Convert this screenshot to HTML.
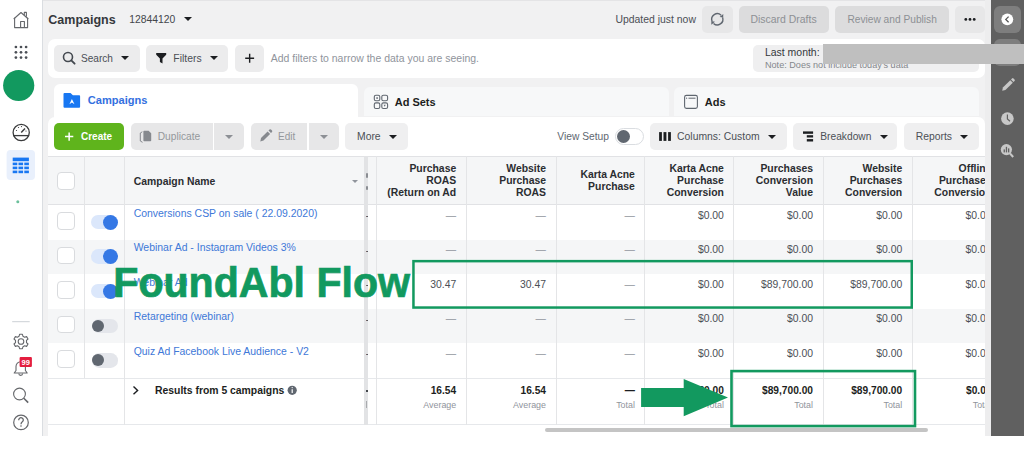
<!DOCTYPE html>
<html><head><meta charset="utf-8">
<style>
*{margin:0;padding:0;box-sizing:border-box}
html,body{width:1024px;height:469px;overflow:hidden;background:#fff;font-family:"Liberation Sans",sans-serif}
#root{position:absolute;left:0;top:0;width:1024px;height:436px;background:#f1f1f2;overflow:hidden}
.a{position:absolute}
.t{position:absolute;white-space:nowrap;line-height:1}
.r{text-align:right}
.btn{position:absolute;background:#e7e7e8;border-radius:5px}
.car{position:absolute;width:0;height:0;border-left:4px solid transparent;border-right:4px solid transparent;border-top:4.5px solid #1c1e21}
.vl{position:absolute;width:1px;background:#e4e5e7}
.cb{position:absolute;width:17.5px;height:17.5px;border:1px solid #d9dbde;border-radius:4px;background:#fff}
.hd{position:absolute;font-weight:bold;font-size:10.4px;line-height:12px;color:#2b2d31;text-align:right;white-space:nowrap}
.cell{position:absolute;font-size:10.4px;line-height:1;color:#4b4f56;text-align:right;white-space:nowrap}
.dash{color:#90949c}
.nm{position:absolute;font-size:10.45px;line-height:1;color:#4078d8;white-space:nowrap;left:133.7px}
</style></head><body>
<div id="root">
  <!-- left sidebar -->
  <div class="a" style="left:0;top:0;width:42px;height:436px;background:#fff"></div>
  <div class="a" style="left:42px;top:0;width:1px;height:436px;background:#dadde1"></div>

  <!-- top header -->
  <div class="a" style="left:43px;top:0;width:948px;height:1px;background:#e4e4e6"></div>
  <div class="t" style="left:48.3px;top:13.90px;font-size:12.5px;font-weight:bold;color:#35383c">Campaigns</div>
  <div class="t" style="left:129.2px;top:14.60px;font-size:10.35px;color:#44474c">12844120</div>
  <div class="car" style="left:183.5px;top:17px"></div>
  <div class="t" style="left:615.4px;top:14.70px;font-size:10.43px;color:#4b4f56">Updated just now</div>
  <div class="btn" style="left:702px;top:6px;width:30.5px;height:26.5px"></div>
  <div class="btn" style="left:738.5px;top:6px;width:90.3px;height:26.5px;background:#dcdcdd"></div>
  <div class="t" style="left:750.5px;top:14.70px;font-size:10.45px;color:#8d9094">Discard Drafts</div>
  <div class="btn" style="left:835.3px;top:6px;width:113.7px;height:26.5px;background:#dcdcdd"></div>
  <div class="t" style="left:847.4px;top:14.70px;font-size:10.2px;color:#8d9094">Review and Publish</div>
  <div class="btn" style="left:955px;top:6px;width:30px;height:26.5px"></div>

  <!-- gray strip + dark panel -->
  <div class="a" style="left:985px;top:0;width:6px;height:436px;background:#ededee"></div>
  <div class="a" style="left:991px;top:0;width:33px;height:436px;background:#606060"></div>
  <div class="a" style="left:994px;top:6px;width:27px;height:27px;border-radius:6px;background:#7e7e7e"></div>
  <div class="a" style="left:994px;top:39px;width:27px;height:27px;border-radius:6px;background:#7e7e7e"></div>

  <!-- search card -->
  <div class="a" style="left:48px;top:38.8px;width:937px;height:39.2px;background:#fff;border-radius:7px"></div>
  <div class="btn" style="left:53.8px;top:44.9px;width:86.2px;height:27.4px;background:#ececed"></div>
  <div class="t" style="left:81px;top:53.80px;font-size:10.1px;color:#4b4f56">Search</div>
  <div class="car" style="left:121.3px;top:56px"></div>
  <div class="btn" style="left:146.3px;top:44.9px;width:82.2px;height:27.4px;background:#ececed"></div>
  <div class="t" style="left:173.3px;top:53.80px;font-size:10.4px;color:#4b4f56">Filters</div>
  <div class="car" style="left:209.8px;top:56px"></div>
  <div class="btn" style="left:234.8px;top:44.9px;width:29.4px;height:27.4px;background:#ececed"></div>
  <div class="t" style="left:270.7px;top:53.80px;font-size:10.48px;color:#90949c">Add filters to narrow the data you are seeing.</div>
  <div class="btn" style="left:753px;top:44.9px;width:226px;height:26.9px;background:#efeff0"></div>
  <div class="t" style="left:764.9px;top:47.90px;font-size:10.47px;color:#35383c">Last month:</div>
  <div class="t" style="left:765px;top:60.60px;font-size:9.1px;color:#84878c">Note: Does not include today's data</div>
  <div class="a" style="left:823px;top:43.5px;width:201px;height:20px;background:#bfbfbf"></div>

  <!-- tabs -->
  <div class="a" style="left:364.2px;top:87px;width:304.7px;height:29.3px;background:#f7f8f9;border-radius:6px 6px 0 0"></div>
  <div class="a" style="left:674.4px;top:87px;width:304.5px;height:29.3px;background:#f7f8f9;border-radius:6px 6px 0 0"></div>
  <div class="a" style="left:53.7px;top:84px;width:304.3px;height:40px;background:#fff;border-radius:6px 6px 0 0"></div>
  <div class="t" style="left:87.75px;top:94.90px;font-size:11.07px;font-weight:bold;color:#3470e0">Campaigns</div>
  <div class="t" style="left:394.7px;top:96.70px;font-size:11px;font-weight:bold;color:#1c1e21">Ad Sets</div>
  <div class="t" style="left:704.8px;top:96.70px;font-size:11px;font-weight:bold;color:#1c1e21">Ads</div>

  <!-- main card -->
  <div class="a" style="left:48px;top:117px;width:937px;height:319px;background:#fff;border-radius:7px 7px 0 0"></div>
  <div class="a" style="left:53.7px;top:110px;width:304.3px;height:10px;background:#fff"></div>

  <!-- toolbar -->
  <div class="a" style="left:53.8px;top:123.1px;width:70.7px;height:27px;background:#5fb41c;border-radius:5px"></div>
  <div class="t" style="left:81px;top:131.70px;font-size:10px;font-weight:bold;color:#fff">Create</div>
  <div class="btn" style="left:130.5px;top:123.1px;width:82.5px;height:27px;border-radius:5px 0 0 5px"></div>
  <div class="t" style="left:157.7px;top:131.80px;font-size:10.2px;color:#94979b">Duplicate</div>
  <div class="btn" style="left:214.3px;top:123.1px;width:29.9px;height:27px;border-radius:0 5px 5px 0"></div>
  <div class="car" style="left:225.3px;top:134.5px;border-top-color:#8d9095"></div>
  <div class="btn" style="left:250.8px;top:123.1px;width:56.3px;height:27px;border-radius:5px 0 0 5px"></div>
  <div class="t" style="left:278.1px;top:131.80px;font-size:10px;color:#94979b">Edit</div>
  <div class="btn" style="left:309.3px;top:123.1px;width:29.4px;height:27px;border-radius:0 5px 5px 0"></div>
  <div class="car" style="left:320px;top:134.5px;border-top-color:#8d9095"></div>
  <div class="btn" style="left:345.1px;top:123.1px;width:62.5px;height:27px;background:#efeff0"></div>
  <div class="t" style="left:357px;top:131.80px;font-size:10.36px;color:#4b4f56">More</div>
  <div class="car" style="left:389.2px;top:134.5px"></div>

  <div class="t" style="left:557.3px;top:131.80px;font-size:10.26px;color:#606770">View Setup</div>
  <div class="a" style="left:615.4px;top:127.7px;width:28.2px;height:17.3px;border:1px solid #dadde1;border-radius:9px;background:#fff"></div>
  <div class="a" style="left:617.3px;top:129.9px;width:13px;height:13px;border-radius:50%;background:#606770"></div>
  <div class="btn" style="left:650px;top:123.2px;width:136.8px;height:26.4px;background:#efeff0"></div>
  <div class="t" style="left:677.1px;top:131.80px;font-size:10.39px;color:#4b4f56">Columns: Custom</div>
  <div class="car" style="left:768px;top:134.5px"></div>
  <div class="btn" style="left:793.3px;top:123.2px;width:103.9px;height:26.4px;background:#efeff0"></div>
  <div class="t" style="left:820.3px;top:131.80px;font-size:10.21px;color:#4b4f56">Breakdown</div>
  <div class="car" style="left:879.9px;top:134.5px"></div>
  <div class="btn" style="left:903.5px;top:123.2px;width:75.4px;height:26.4px;background:#efeff0"></div>
  <div class="t" style="left:915.8px;top:131.80px;font-size:10.34px;color:#4b4f56">Reports</div>
  <div class="car" style="left:960px;top:134.5px"></div>

  <!-- TABLE -->
  <div class="a" style="left:0;top:0;width:985px;height:436px;overflow:hidden"><div class="a" style="left:48px;top:156px;width:937px;height:49px;background:#f5f6f7;border-top:1px solid #e1e2e5;border-bottom:1px solid #e1e2e5"></div>
<div class="a" style="left:48px;top:205.00px;width:937px;height:34.5px;background:#fff"></div>
<div class="a" style="left:48px;top:239.50px;width:937px;height:34.5px;background:#f5f6f7"></div>
<div class="a" style="left:48px;top:274.00px;width:937px;height:34.5px;background:#fff"></div>
<div class="a" style="left:48px;top:308.50px;width:937px;height:34.5px;background:#f5f6f7"></div>
<div class="a" style="left:48px;top:343.00px;width:937px;height:34.5px;background:#fff"></div>
<div class="a" style="left:48px;top:377.50px;width:937px;height:47.50px;background:#fff;border-top:1px solid #e6e8eb;border-bottom:1px solid #e6e8eb"></div>
<div class="vl" style="left:84.3px;top:156px;height:221.5px"></div>
<div class="vl" style="left:124.2px;top:156px;height:269.0px"></div>
<div class="vl" style="left:376.2px;top:156px;height:269.0px"></div>
<div class="vl" style="left:465.7px;top:156px;height:269.0px"></div>
<div class="vl" style="left:555.5px;top:156px;height:269.0px"></div>
<div class="vl" style="left:644.4px;top:156px;height:269.0px"></div>
<div class="vl" style="left:733.4px;top:156px;height:269.0px"></div>
<div class="vl" style="left:822.5px;top:156px;height:269.0px"></div>
<div class="vl" style="left:911.7px;top:156px;height:269.0px"></div>
<div class="a" style="left:364px;top:156px;width:3.5px;height:269.0px;background:#e2e3e5"></div>
<div class="cb" style="left:57.4px;top:172px"></div>
<div class="t" style="left:133.8px;top:176.5px;font-size:10.4px;font-weight:bold;color:#2b2d31">Campaign Name</div>
<div class="car" style="left:352px;top:180px;border-left-width:3px;border-right-width:3px;border-top:3.5px solid #90949c"></div>
<div class="hd" style="right:528.8px;top:163.4px">Purchase<br>ROAS<br>(Return on Ad</div>
<div class="hd" style="right:439.0px;top:163.4px">Website<br>Purchase<br>ROAS</div>
<div class="hd" style="right:350.1px;top:169.4px">Karta Acne<br>Purchase</div>
<div class="hd" style="right:261.1px;top:163.4px">Karta Acne<br>Purchase<br>Conversion</div>
<div class="hd" style="right:172.0px;top:163.4px">Purchases<br>Conversion<br>Value</div>
<div class="hd" style="right:82.8px;top:163.4px">Website<br>Purchases<br>Conversion</div>
<div class="hd" style="right:-6.5px;top:163.4px">Offline<br>Purchases<br>Conversion</div>
<div class="cb" style="left:57.4px;top:212.4px"></div>
<div class="a" style="left:91px;top:214.9px;width:25px;height:14.6px;border-radius:7.3px;background:#dbe7fb"></div>
<div class="a" style="left:102.6px;top:214.5px;width:15.2px;height:15.2px;border-radius:50%;background:#3578e5"></div>
<div class="nm" style="top:208.75px">Conversions CSP on sale ( 22.09.2020)</div>
<div class="t" style="left:365.5px;top:211.2px;font-size:10.4px;color:#4b4f56;width:2px;overflow:hidden">-</div>
<div class="cell dash" style="right:528.8px;top:210.69px">—</div>
<div class="cell dash" style="right:439.0px;top:210.69px">—</div>
<div class="cell dash" style="right:350.1px;top:210.69px">—</div>
<div class="cell" style="right:261.1px;top:210.69px">$0.00</div>
<div class="cell" style="right:172.0px;top:210.69px">$0.00</div>
<div class="cell" style="right:82.8px;top:210.69px">$0.00</div>
<div class="cell" style="right:-6.5px;top:210.69px">$0.00</div>
<div class="cb" style="left:57.4px;top:246.9px"></div>
<div class="a" style="left:91px;top:249.4px;width:25px;height:14.6px;border-radius:7.3px;background:#dbe7fb"></div>
<div class="a" style="left:102.6px;top:249.0px;width:15.2px;height:15.2px;border-radius:50%;background:#3578e5"></div>
<div class="nm" style="top:243.25px">Webinar Ad - Instagram Videos 3%</div>
<div class="t" style="left:365.5px;top:245.7px;font-size:10.4px;color:#4b4f56;width:2px;overflow:hidden">-</div>
<div class="cell dash" style="right:528.8px;top:245.19px">—</div>
<div class="cell dash" style="right:439.0px;top:245.19px">—</div>
<div class="cell dash" style="right:350.1px;top:245.19px">—</div>
<div class="cell" style="right:261.1px;top:245.19px">$0.00</div>
<div class="cell" style="right:172.0px;top:245.19px">$0.00</div>
<div class="cell" style="right:82.8px;top:245.19px">$0.00</div>
<div class="cell" style="right:-6.5px;top:245.19px">$0.00</div>
<div class="cb" style="left:57.4px;top:281.4px"></div>
<div class="a" style="left:91px;top:283.9px;width:25px;height:14.6px;border-radius:7.3px;background:#dbe7fb"></div>
<div class="a" style="left:102.6px;top:283.5px;width:15.2px;height:15.2px;border-radius:50%;background:#3578e5"></div>
<div class="nm" style="top:277.75px">Webinar Ad</div>
<div class="t" style="left:365.5px;top:280.2px;font-size:10.4px;color:#4b4f56;width:2px;overflow:hidden">-</div>
<div class="cell" style="right:528.8px;top:279.69px">30.47</div>
<div class="cell" style="right:439.0px;top:279.69px">30.47</div>
<div class="cell dash" style="right:350.1px;top:279.69px">—</div>
<div class="cell" style="right:261.1px;top:279.69px">$0.00</div>
<div class="cell" style="right:172.0px;top:279.69px">$89,700.00</div>
<div class="cell" style="right:82.8px;top:279.69px">$89,700.00</div>
<div class="cell" style="right:-6.5px;top:279.69px">$0.00</div>
<div class="cb" style="left:57.4px;top:315.9px"></div>
<div class="a" style="left:92px;top:318.7px;width:25.5px;height:14.6px;border-radius:7.3px;background:#e4e6eb"></div>
<div class="a" style="left:92px;top:319.6px;width:12.1px;height:12.1px;border-radius:50%;background:#606770"></div>
<div class="nm" style="top:312.25px">Retargeting (webinar)</div>
<div class="t" style="left:365.5px;top:314.7px;font-size:10.4px;color:#4b4f56;width:2px;overflow:hidden">-</div>
<div class="cell dash" style="right:528.8px;top:314.19px">—</div>
<div class="cell dash" style="right:439.0px;top:314.19px">—</div>
<div class="cell dash" style="right:350.1px;top:314.19px">—</div>
<div class="cell" style="right:261.1px;top:314.19px">$0.00</div>
<div class="cell" style="right:172.0px;top:314.19px">$0.00</div>
<div class="cell" style="right:82.8px;top:314.19px">$0.00</div>
<div class="cell" style="right:-6.5px;top:314.19px">$0.00</div>
<div class="cb" style="left:57.4px;top:350.4px"></div>
<div class="a" style="left:92px;top:353.2px;width:25.5px;height:14.6px;border-radius:7.3px;background:#e4e6eb"></div>
<div class="a" style="left:92px;top:354.1px;width:12.1px;height:12.1px;border-radius:50%;background:#606770"></div>
<div class="nm" style="top:346.75px">Quiz Ad Facebook Live Audience - V2</div>
<div class="t" style="left:365.5px;top:349.2px;font-size:10.4px;color:#4b4f56;width:2px;overflow:hidden">-</div>
<div class="cell dash" style="right:528.8px;top:348.69px">—</div>
<div class="cell dash" style="right:439.0px;top:348.69px">—</div>
<div class="cell dash" style="right:350.1px;top:348.69px">—</div>
<div class="cell" style="right:261.1px;top:348.69px">$0.00</div>
<div class="cell" style="right:172.0px;top:348.69px">$0.00</div>
<div class="cell" style="right:82.8px;top:348.69px">$0.00</div>
<div class="cell" style="right:-6.5px;top:348.69px">$0.00</div>
<div class="t" style="left:155px;top:386.19px;font-size:10.4px;font-weight:bold;color:#1c1e21">Results from 5 campaigns</div>
<div class="cell" style="right:528.8px;top:386.06px;font-size:10.2px;font-weight:bold;color:#1c1e21">16.54</div>
<div class="cell" style="right:528.8px;top:400.86px;font-size:8.9px;color:#90949c">Average</div>
<div class="cell" style="right:439.0px;top:386.06px;font-size:10.2px;font-weight:bold;color:#1c1e21">16.54</div>
<div class="cell" style="right:439.0px;top:400.86px;font-size:8.9px;color:#90949c">Average</div>
<div class="cell" style="right:350.1px;top:386.06px;font-size:10.2px;font-weight:bold;color:#1c1e21">—</div>
<div class="cell" style="right:350.1px;top:400.86px;font-size:8.9px;color:#90949c">Total</div>
<div class="cell" style="right:261.1px;top:386.06px;font-size:10.2px;font-weight:bold;color:#1c1e21">$0.00</div>
<div class="cell" style="right:261.1px;top:400.86px;font-size:8.9px;color:#90949c">Total</div>
<div class="cell" style="right:172.0px;top:386.06px;font-size:10.2px;font-weight:bold;color:#1c1e21">$89,700.00</div>
<div class="cell" style="right:172.0px;top:400.86px;font-size:8.9px;color:#90949c">Total</div>
<div class="cell" style="right:82.8px;top:386.06px;font-size:10.2px;font-weight:bold;color:#1c1e21">$89,700.00</div>
<div class="cell" style="right:82.8px;top:400.86px;font-size:8.9px;color:#90949c">Total</div>
<div class="cell" style="right:-6.5px;top:386.06px;font-size:10.2px;font-weight:bold;color:#1c1e21">$0.00</div>
<div class="cell" style="right:-6.5px;top:400.86px;font-size:8.9px;color:#90949c">Total</div>
<div class="a" style="left:365.5px;top:172.5px;width:2px;height:5px;background:#8a8d92;border-radius:1px"></div>
<div class="a" style="left:365.5px;top:185.5px;width:2px;height:4.5px;background:#8a8d92;border-radius:1px"></div>
<div class="a" style="left:365.6px;top:389.6px;width:2.2px;height:2.2px;background:#44474c"></div>
<div class="a" style="left:365.8px;top:401.4px;width:1.6px;height:6.4px;background:#a9abae"></div>
<div class="a" style="left:544.6px;top:428.2px;width:383.4px;height:4.2px;border-radius:2px;background:#c4c4c4"></div></div>

  <!-- ICONS overlay -->
  <svg class="a" style="left:0;top:0" width="1024" height="436" viewBox="0 0 1024 436">
    <!-- house -->
    <g fill="none" stroke="#65676b" stroke-width="1.1" stroke-linejoin="round">
      <path d="M13.7 19 L21 12.5 L28.3 19"/>
      <path d="M14.6 17.8 V27.6 H27.6 V17.8"/>
      <path d="M20.6 27.6 V21.5 H24.4 V27.6"/>
      <path d="M24.3 15 V12.4 H26.4 V16.8"/>
    </g>
    <!-- grid dots -->
    <g fill="#4b4f56">
      <circle cx="15.9" cy="47" r="1.35"/><circle cx="21" cy="47" r="1.35"/><circle cx="26.1" cy="47" r="1.35"/>
      <circle cx="15.9" cy="52.3" r="1.35"/><circle cx="21" cy="52.3" r="1.35"/><circle cx="26.1" cy="52.3" r="1.35"/>
      <circle cx="15.9" cy="57.6" r="1.35"/><circle cx="21" cy="57.6" r="1.35"/><circle cx="26.1" cy="57.6" r="1.35"/>
    </g>
    <circle cx="18.7" cy="85.5" r="15.6" fill="#12995f"/>
    <!-- gauge -->
    <g fill="none" stroke="#3a3b3c" stroke-width="1.3">
      <circle cx="21.2" cy="132.5" r="8.1"/>
      <path d="M13.3 135.6 H29.1"/>
      <path d="M21.2 132.6 L25 128.6" stroke-width="1.4"/>
    </g>
    <g fill="#3a3b3c"><circle cx="16.5" cy="130.5" r="0.6"/><circle cx="18.5" cy="127.5" r="0.6"/><circle cx="21.5" cy="126.6" r="0.6"/><circle cx="26" cy="131" r="0.6"/></g>
    <!-- table nav -->
    <rect x="6.6" y="149.9" width="28.4" height="30.1" rx="4" fill="#e9f0fc"/>
    <g fill="#1877f2">
      <rect x="12.7" y="157.6" width="16.2" height="3.6"/>
      <rect x="12.7" y="162.6" width="4.6" height="2.6"/><rect x="18.5" y="162.6" width="4.6" height="2.6"/><rect x="24.3" y="162.6" width="4.6" height="2.6"/>
      <rect x="12.7" y="166.6" width="4.6" height="2.6"/><rect x="18.5" y="166.6" width="4.6" height="2.6"/><rect x="24.3" y="166.6" width="4.6" height="2.6"/>
      <rect x="12.7" y="170.6" width="4.6" height="2.6"/><rect x="18.5" y="170.6" width="4.6" height="2.6"/><rect x="24.3" y="170.6" width="4.6" height="2.6"/>
    </g>
    <circle cx="17.8" cy="201.8" r="1.5" fill="#6cc09c"/>
    <path d="M12.2 321.7 H29.7" stroke="#ccd0d5" stroke-width="1"/>
    <!-- gear -->
    <g fill="none" stroke="#65676b" stroke-width="1.1" stroke-linejoin="round">
      <path d="M19.6 334.3 H22.4 L23 336.3 L24.6 337.2 L26.6 336.6 L28 339 L26.5 340.4 V342.6 L28 344 L26.6 346.4 L24.6 345.8 L23 346.7 L22.4 348.7 H19.6 L19 346.7 L17.4 345.8 L15.4 346.4 L14 344 L15.5 342.6 V340.4 L14 339 L15.4 336.6 L17.4 337.2 L19 336.3 Z"/>
      <circle cx="21" cy="341.5" r="2.8"/>
    </g>
    <!-- bell -->
    <g fill="none" stroke="#65676b" stroke-width="1.1" stroke-linejoin="round">
      <path d="M14.2 373 H27.2 L25.4 370.5 V366.5 A4.7 4.7 0 0 0 16 366.5 V370.5 Z"/>
      <path d="M18.8 373.5 A1.9 1.9 0 0 0 22.6 373.5"/>
    </g>
    <rect x="19.6" y="356.9" width="12.3" height="10.1" rx="1" fill="#e41e3f"/>
    <text x="25.75" y="364.9" font-family="Liberation Sans" font-weight="bold" font-size="7.5" fill="#fff" text-anchor="middle">99</text>
    <!-- search -->
    <g fill="none" stroke="#65676b" stroke-width="1.1">
      <circle cx="19.5" cy="394" r="5.9"/>
      <path d="M23.8 398.2 L28.2 402.6" stroke-width="1.6"/>
    </g>
    <!-- help -->
    <circle cx="21" cy="422.4" r="7.3" fill="none" stroke="#65676b" stroke-width="1.2"/>
    <path d="M18.7 420.2 A2.3 2.3 0 1 1 22.6 421.6 C21.4 422.5 21 423 21 424.2" fill="none" stroke="#65676b" stroke-width="1.3"/>
    <circle cx="21" cy="426" r="0.8" fill="#65676b"/>

    <!-- header refresh -->
    <g fill="none" stroke="#606770" stroke-width="1.4">
      <path d="M712.04 21.2 A5.6 5.6 0 0 1 721.1 15.2"/>
      <path d="M722.56 17.38 A5.6 5.6 0 0 1 713.5 23.4"/>
    </g>
    <path d="M723.3 13.9 L723.2 17.6 L719.6 16.9 Z" fill="#606770"/>
    <path d="M711.3 24.7 L711.4 21 L715 21.7 Z" fill="#606770"/>
    <g fill="#1c1e21"><circle cx="965.8" cy="19.4" r="1.4"/><circle cx="970" cy="19.4" r="1.4"/><circle cx="974.2" cy="19.4" r="1.4"/></g>
    <!-- dark panel -->
    <circle cx="1007.3" cy="19.3" r="5.9" fill="#fff"/>
    <path d="M1008.6 16.6 L1005.8 19.4 L1008.6 22.2" fill="none" stroke="#555" stroke-width="1.3"/>
    <g fill="#c8c8c8">
      <path d="M1002.2 90.8 L1002.9 87.6 L1010.3 80.2 L1012.8 82.7 L1005.4 90.1 Z"/>
      <path d="M1011 79.5 L1012 78.5 A1 1 0 0 1 1013.5 78.5 L1014.5 79.5 A1 1 0 0 1 1014.5 81 L1013.5 82 Z"/>
      <circle cx="1007.4" cy="118.6" r="6.3"/>
      <circle cx="1006.4" cy="149.6" r="5.6"/>
    </g>
    <path d="M1007.4 114.6 V119 L1010 121.2" fill="none" stroke="#626262" stroke-width="1.2"/>
    <path d="M1010 153.5 L1013.2 157" stroke="#c8c8c8" stroke-width="2"/>
    <g fill="#626262"><rect x="1003.6" y="149.4" width="1.3" height="3"/><rect x="1005.8" y="146.8" width="1.3" height="5.6"/><rect x="1008" y="148.4" width="1.3" height="4"/></g>

    <!-- search bar icons -->
    <g fill="none" stroke="#444950" stroke-width="1.6">
      <circle cx="68" cy="57" r="4.5"/>
      <path d="M71.3 60.4 L74.6 63.7" stroke-width="1.9" stroke-linecap="round"/>
    </g>
    <path d="M156.2 53.1 H166.2 V54.7 L162.5 58.6 V63.5 L159.9 62.1 V58.6 L156.2 54.7 Z" fill="#1c1e21"/>
    <path d="M245.2 58.3 H254.1 M249.65 53.8 V62.8" stroke="#1c1e21" stroke-width="1.4"/>
    <!-- tab icons -->
    <path d="M64.5 92.9 H70.5 L72.9 95.2 H79.2 A1 1 0 0 1 80.1 96.2 V106.8 A1 1 0 0 1 79.2 107.7 H64.5 A1 1 0 0 1 63.5 106.8 V93.9 A1 1 0 0 1 64.5 92.9 Z" fill="#1877f2"/>
    <path d="M71.9 99 L74.5 104.2 L71.9 102.6 L69.4 104.2 Z" fill="#fff"/>
    <g fill="none" stroke="#606770" stroke-width="1.1">
      <rect x="374.3" y="95.2" width="5.5" height="5.6" rx="1.6"/>
      <rect x="381.8" y="95.2" width="5.8" height="5.6" rx="1.6"/>
      <rect x="374.3" y="102.9" width="5.5" height="5.6" rx="1.6"/>
      <rect x="381.8" y="102.9" width="5.8" height="5.6" rx="1.6"/>
    </g>
    <g fill="#606770"><rect x="376.3" y="97.3" width="1.6" height="1.5"/><path d="M383.7 104.8 H385.7 L384.7 106.8 Z"/></g>
    <g fill="none" stroke="#606770" stroke-width="1.1">
      <rect x="684.6" y="95.4" width="12.8" height="13" rx="1.8"/>
    </g>
    <path d="M688.5 98.2 H695.5" stroke="#606770" stroke-width="1"/>
    <circle cx="686.6" cy="98.2" r="0.6" fill="#606770"/>
    <!-- toolbar icons -->
    <path d="M65 136.6 H73.3 M69.15 132.5 V140.7" stroke="#fff" stroke-width="1.5"/>
    <g fill="#86898e">
      <path d="M144.2 130.7 H148.6 L151.2 133.3 V140.4 A0.8 0.8 0 0 1 150.4 141.2 H144.2 A0.8 0.8 0 0 1 143.4 140.4 V131.5 A0.8 0.8 0 0 1 144.2 130.7 Z"/>
    </g>
    <path d="M142.3 131.8 L140.3 133 V141 L142.5 142.3" fill="none" stroke="#86898e" stroke-width="1"/>
    <path d="M260.3 141.5 L261 138 L267.6 131.4 L270.1 133.9 L263.5 140.5 Z" fill="#86898e"/>
    <path d="M268.5 130.5 L269.5 129.6 A1 1 0 0 1 271 129.6 L272 130.6 A1 1 0 0 1 272 132 L271 133 Z" fill="#86898e"/>
    <g fill="#1c1e21">
      <rect x="659.1" y="132.1" width="2.8" height="8.8"/><rect x="663.5" y="132.1" width="2.9" height="8.8"/><rect x="668.1" y="132.1" width="2.8" height="8.8"/>
      <rect x="803" y="131.4" width="10.1" height="2.4"/><rect x="806.8" y="135.2" width="6.3" height="2.3"/><rect x="806.8" y="139.1" width="6.3" height="2.4"/>
    </g>
    <path d="M133.5 386.6 L137.6 390.4 L133.5 394.2" fill="none" stroke="#1c1e21" stroke-width="1.4"/>
    <circle cx="292.2" cy="390.3" r="4.6" fill="#606770"/>
    <path d="M292.2 389.3 V393" stroke="#fff" stroke-width="1.2"/><circle cx="292.2" cy="387.6" r="0.7" fill="#fff"/>
  </svg>

  <!-- ANNOTATIONS -->
  <svg class="a" style="left:0;top:0" width="1024" height="469" viewBox="0 0 1024 469">
    <rect x="413.45" y="261.15" width="498.3" height="46.4" fill="none" stroke="#12995f" stroke-width="2.5"/>
    <rect x="731.5" y="371.1" width="183.5" height="55" fill="none" stroke="#12995f" stroke-width="2.6"/>
    <path d="M641.1 388.1 H683.7 V379.1 L728 397.5 L683.7 416.2 V406.9 H641.1 Z" fill="#12995f"/>
  </svg>
  <div class="t" style="left:113.3px;top:263.0px;font-size:41.1px;font-weight:bold;color:#12995f;-webkit-text-stroke:0.7px #12995f;transform:scaleY(1.055);transform-origin:0 34.8px">FoundAbl Flow</div>
</div>
</body></html>
